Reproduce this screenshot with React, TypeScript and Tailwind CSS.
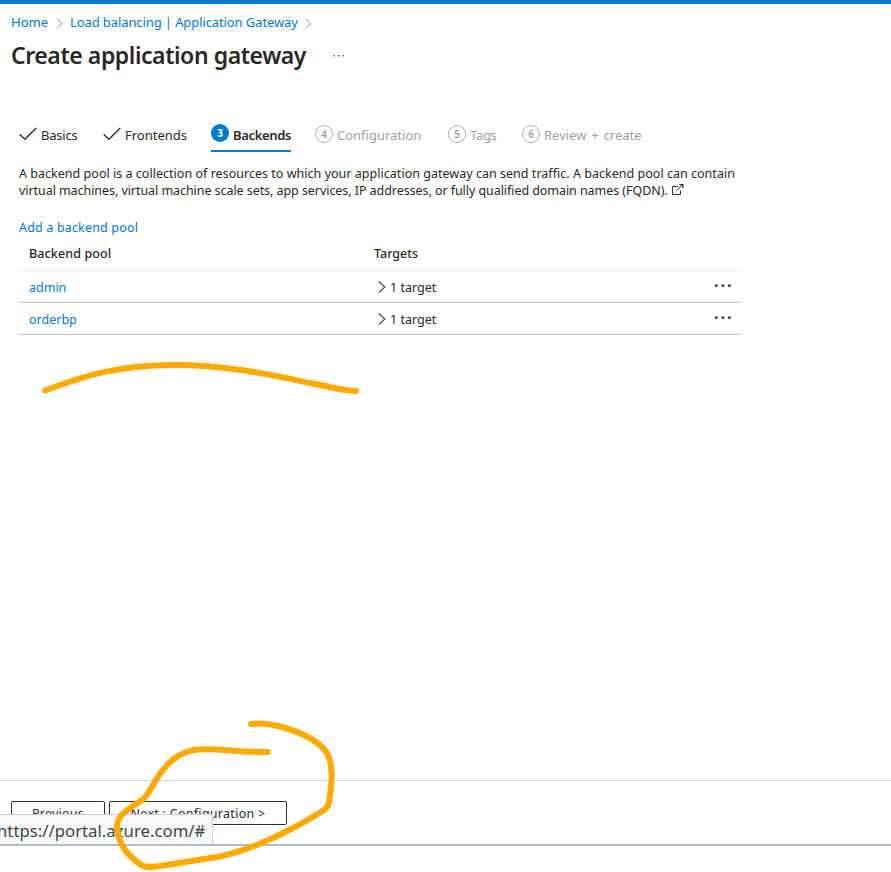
import React from 'react';

function Chevron({ className }: { className: string }) {
  return (
    <svg className={className} viewBox="0 0 8 12" fill="none" stroke="currentColor" strokeWidth="1.1">
      <path d="M1 0.5 L6.8 6 L1 11.5" />
    </svg>
  );
}

function Check() {
  return (
    <svg className="h-[14px] w-[18px] shrink-0" viewBox="0 0 18 14" fill="none" stroke="#323130" strokeWidth="1.4">
      <path d="M0.6 7.2 L5.9 12.3 L17.3 1" />
    </svg>
  );
}

function Dots() {
  return (
    <svg className="-mt-[2px] h-1 w-[18px]" viewBox="0 0 18 4" fill="#5c5a58">
      <circle cx="2.3" cy="1.7" r="1.65" />
      <circle cx="8.9" cy="1.7" r="1.65" />
      <circle cx="15.4" cy="1.7" r="1.65" />
    </svg>
  );
}

function StepNumber({ n, active }: { n: number; active?: boolean }) {
  return (
    <span
      className={
        active
          ? 'flex h-[18px] w-[18px] shrink-0 items-center justify-center rounded-full bg-[#0078d4] text-[10px] font-bold leading-none text-white'
          : 'flex h-[18px] w-[18px] shrink-0 items-center justify-center rounded-full border border-[#b3b1af] text-[10px] font-semibold leading-none text-[#a19f9d]'
      }
    >
      {n}
    </span>
  );
}

function PoolRow({ name }: { name: string }) {
  return (
    <div className="flex h-8 items-center border-b border-[#c8c6c4] pl-[10px] pr-[9px]">
      <a className="w-[349px] pt-[3px] leading-4 text-[#0078d4]">{name}</a>
      <Chevron className="mt-px h-3 w-2 text-[#444]" />
      <span className="ml-1 grow pt-[3px] leading-4">1 target</span>
      <Dots />
    </div>
  );
}

export default function App() {
  return (
    <div className="relative flex h-[872px] w-[891px] flex-col overflow-hidden bg-white font-['Noto_Sans',sans-serif] text-[12.5px] text-[#292827]">
      <div className="h-1 shrink-0 bg-[#0078d4]" />
      <nav className="flex h-9 shrink-0 items-center whitespace-nowrap pl-[11px] pt-[2px] text-[13px] text-[#0078d4]">
        <span className="w-[45px]">Home</span>
        <Chevron className="h-[11px] w-[7px] text-[#8a8886]" />
        <span className="ml-[7px] w-[235px] tracking-[-0.1px]">Load balancing | Application Gateway</span>
        <Chevron className="h-[11px] w-[7px] text-[#8a8886]" />
      </nav>
      <header className="flex h-8 shrink-0 items-center whitespace-nowrap pl-[11px]">
        <h1 className="-mt-[2px] w-[322px] text-[23px] font-semibold leading-8 tracking-[-0.43px]">Create application gateway</h1>
        <svg className="h-[2px] w-3" viewBox="0 0 12 2" fill="#605e5c">
          <path d="M0.5 0h1.5v1.5h-1.5z M5 0h1.5v1.5h-1.5z M9.5 0h1.5v1.5h-1.5z" />
        </svg>
      </header>

      <div className="mt-[44px] flex h-9 shrink-0 whitespace-nowrap pl-[19px] text-[13px]">
        <div className="flex h-9 w-[84px] items-center gap-1"><Check /><span className="pt-[3px] tracking-[-0.2px]">Basics</span></div>
        <div className="flex h-9 w-[108px] items-center gap-1"><Check /><span className="pt-[3px]">Frontends</span></div>
        <div className="flex h-9 w-[80px] items-center gap-[4px] border-b-2 border-[#0078d4]"><StepNumber n={3} active /><span className="pt-[5px] font-semibold tracking-[-0.35px]">Backends</span></div>
        <div className="ml-6 flex h-9 w-[133px] items-center gap-1 text-[#a19f9d]"><StepNumber n={4} /><span className="pt-[3px]">Configuration</span></div>
        <div className="flex h-9 w-[74px] items-center gap-1 text-[#a19f9d]"><StepNumber n={5} /><span className="pt-[3px] tracking-[-0.3px]">Tags</span></div>
        <div className="flex h-9 items-center gap-1 text-[#a19f9d]"><StepNumber n={6} /><span className="pt-[3px] [word-spacing:1.5px]">Review + create</span></div>
      </div>

      <p className="mt-[13px] whitespace-nowrap pl-[19px] leading-[17px]">
        <span className="tracking-[0.025px]">A backend pool is a collection of resources to which your application gateway can send traffic. A backend pool can contain</span>
        <br />
        <span className="tracking-[-0.06px]">virtual machines, virtual machine scale sets, app services, IP addresses, or fully qualified domain names (FQDN).</span>
        <svg className="ml-1 inline-block h-3 w-3 align-[-1px]" viewBox="0 0 12 12" fill="none" stroke="#323130">
          <path d="M6 2.5H0.5v8h8V6.5" />
          <path d="M4.5 6.5L10.5 1" />
          <path d="M7.5 0.6h3.4v3.4" strokeWidth="1.3" />
        </svg>
      </p>
      <a className="mt-5 pl-[19px] leading-[17px] tracking-[0.17px] text-[#0078d4]">Add a backend pool</a>

      <section className="ml-[19px] w-[722px]">
        <div className="flex h-[35px] items-center border-b border-[#edebe9] pl-[10px] pt-[2px] font-medium">
          <span className="w-[345px] tracking-[0.12px]">Backend pool</span>
          <span>Targets</span>
        </div>
        <PoolRow name="admin" />
        <PoolRow name="orderbp" />
      </section>

      <footer className="mt-auto flex h-[92px] shrink-0 gap-1 whitespace-nowrap border-t border-[#dcdcdc] pl-[11px] pt-5">
        <button className="h-6 w-[94px] rounded-[2px] border border-[#323130] leading-[23px] tracking-[0.25px]">Previous</button>
        <button className="h-6 w-[178px] rounded-[2px] border border-[#323130] leading-[23px] tracking-[0.28px]">Next : Configuration &gt;</button>
      </footer>

      <div className="absolute left-0 top-[844px] h-[2px] w-full bg-[#b1bbc9]" />
      <div className="absolute left-0 top-[814px] h-[30px] w-[213px] overflow-hidden whitespace-nowrap border-r border-t border-[#d0d0d0] bg-[#f8f8f8] text-[16.75px] leading-[32px] text-[#444]">
        <span className="-ml-[3px]">https://portal.azure.com/#</span>
      </div>

      <svg className="pointer-events-none absolute inset-0 h-[872px] w-[891px]" viewBox="0 0 891 872" fill="none" stroke="#ffaa00" strokeWidth="6" strokeLinecap="round" strokeLinejoin="round">
        <path d="M45 390.5 C82 377 115 365 174 365 C232 365 280 377 315 384 C333 387.5 344 391 356 391" />
        <path d="M268 752 C238 752.5 220 748 198 749.5 C179 751 166 763 156 780 C148 793 147 798 136 804 C124 812 117 817 117 827 C118 846 130 857 141 865 C146 868 152 867 160 866 L217 857 C254 850 297 827 321 812 C329 807 329 804 330 795 C333 776 332 764 328 755 C321 742 303 733 282 727 C271 724 262 722.5 251 724" />
      </svg>
    </div>
  );
}
